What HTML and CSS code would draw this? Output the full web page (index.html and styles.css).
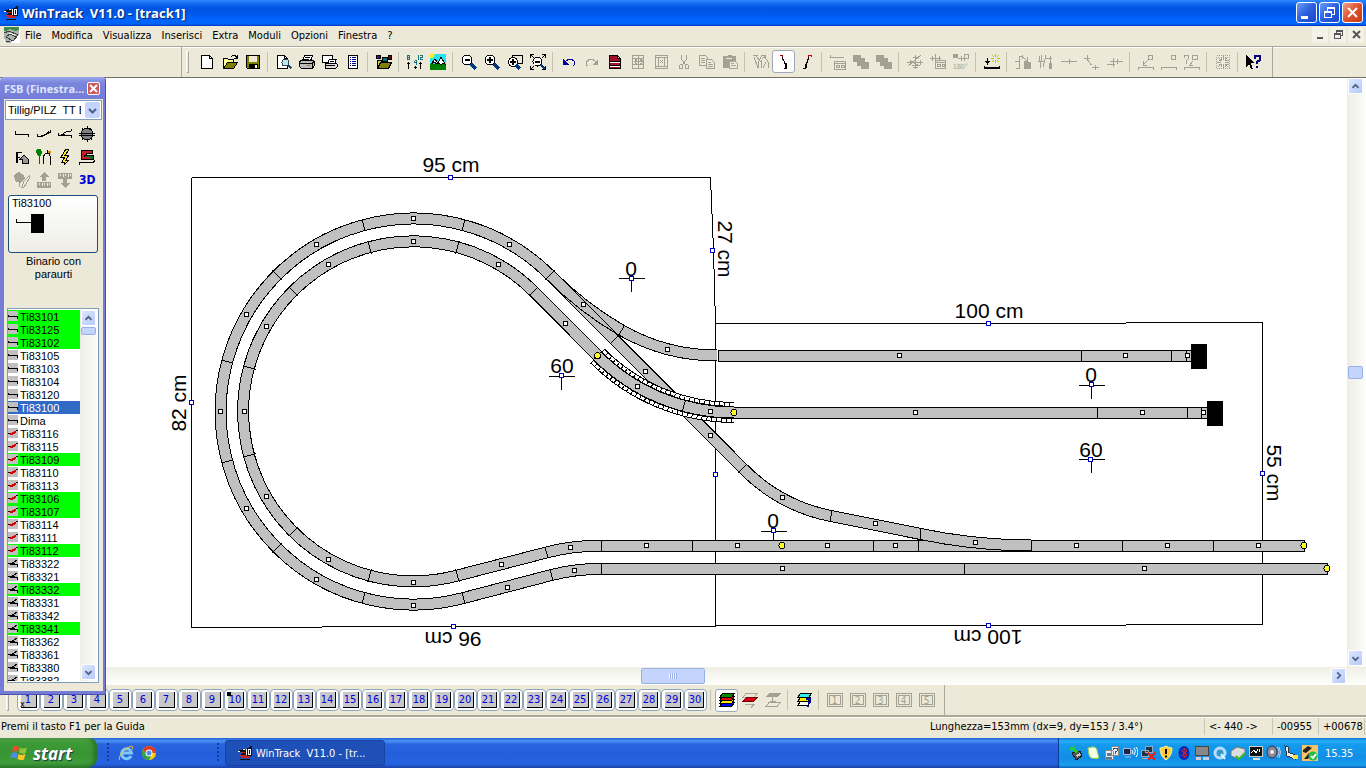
FILE: index.html
```html
<!DOCTYPE html>
<html lang="it">
<head>
    <meta charset="UTF-8">
    <meta name="viewport" content="width=device-width, initial-scale=1.0">
    <title>WinTrack V11.0 - [track1]</title>
    <link rel="stylesheet" href="styles.css">
</head>
<body>
    <header class="titlebar">
        <svg class="icon" viewBox="0 0 16 16"><path fill="#111" d="M0 6l6-2 2 1 6-4 1 1v9H2l3-3z"/><path fill="#fff" d="M9 4h1v6H9zM11 4h3v6h-3zM1 6h2v1H1zM6 4h2v1H6z"/><path fill="#111" d="M12 5h1v4h-1z"/><path fill="#c22" d="M3 10h6l4 2v1H5zM4 7h4v1H4z"/><path stroke="#111" d="M3 14.500h10"/></svg>
        <h1>WinTrack&nbsp; V11.0 - [track1]</h1>
        <div class="window-buttons">
            <button class="win" aria-label="Riduci a icona"><svg viewBox="0 0 19 19"><path stroke="#fff" stroke-width="3" d="M4 14h7"/></svg></button>
            <button class="win" aria-label="Ripristina"><svg viewBox="0 0 19 19"><path fill="none" stroke="#fff" d="M7.500 8V4.500h7v7H12M4.500 8.500h7v6h-7zM4 9.500h8M7 5.500h8"/></svg></button>
            <button class="win close" aria-label="Chiudi"><svg class="smooth" viewBox="0 0 19 19"><path stroke="#fff" stroke-width="2" d="M5 5l9 9M14 5l-9 9"/></svg></button>
        </div>
    </header>

    <nav class="menubar">
        <svg class="icon" viewBox="0 0 16 16"><path fill="#fff" d="M0 0h16v16H0z"/><path fill="#a9b3ab" d="M0 1h15v6l-9 9H2L0 11z"/><path fill="#3b8a4a" d="M0 0h15v3l-4 1-5-2-4 2H0z"/><path fill="none" stroke="#444" d="M0 6l5-2 9 4-5 6-7-4 4-3 6 3M2 14l4 1"/><path stroke="#fff" d="M5 6l6 2"/></svg>
        <a href="#">File</a>
        <a href="#">Modifica</a>
        <a href="#">Visualizza</a>
        <a href="#">Inserisci</a>
        <a href="#">Extra</a>
        <a href="#">Moduli</a>
        <a href="#">Opzioni</a>
        <a href="#">Finestra</a>
        <a href="#">?</a>
        <div class="mdi-buttons">
            <button aria-label="Riduci documento"><svg viewBox="0 0 14 14"><path stroke="#555" stroke-width="2" d="M4 10h6"/></svg></button>
            <button aria-label="Ripristina documento"><svg viewBox="0 0 14 14"><path fill="none" stroke="#555" d="M5.500 5V2.500h6v5H9M3.500 6.500h6v4h-6zM3 5.500h7M5 3.500h7"/></svg></button>
            <button aria-label="Chiudi documento"><svg class="smooth" viewBox="0 0 14 14"><path stroke="#555" stroke-width="2" d="M4 3l7 7M11 3l-7 7"/></svg></button>
        </div>
    </nav>

    <div class="toolbar">
        <div class="tools main-tools">
            <span class="grip"></span>
            <button class="tool" aria-label="Nuovo"><svg viewBox="0 0 16 16"><path fill="#fff" stroke="#000" d="M2.500 1.500h8l3 3v10h-11zM10.500 1.500v3h3"/></svg></button>
            <button class="tool" aria-label="Apri"><svg viewBox="0 0 16 16"><path fill="#ff9" stroke="#000" d="M1.500 14V4.500h4l1 1h5v3"/><path fill="#808000" stroke="#000" d="M1.500 14.500l4-6h10l-4 6z"/><path fill="none" stroke="#000" d="M9 3l2-1.500h2l2 2M15.500 1v3H12"/></svg></button>
            <button class="tool" aria-label="Salva"><svg viewBox="0 0 16 16"><path fill="#808000" stroke="#000" d="M1.500 1.500h13v13h-12l-1-1z"/><path fill="#ece9d8" d="M4 2h8v6H4z"/><path d="M4 10h9v4H4z"/><path fill="#fff" d="M10 11h2v3h-2z"/></svg></button>
            <span class="sep"></span>
            <button class="tool" aria-label="Anteprima"><svg viewBox="0 0 16 16"><path fill="#fff" stroke="#000" d="M1.500 1.500h7l3 3v10h-10zM8.500 1.500v3h3"/><circle cx="9.500" cy="8.500" r="3.500" fill="#b8e8ec" stroke="#345"/><path stroke="#246" stroke-width="2" d="M12 11l3.500 3.500"/></svg></button>
            <button class="tool" aria-label="Stampa"><svg viewBox="0 0 16 16"><path fill="#fff" stroke="#000" d="M3.500 7l2-5.500h8l-2 5.500M6 3.500h5M5 5.500h5"/><path fill="#bbb" stroke="#000" d="M.500 7.500l2-1h12l1 1v4l-2 3h-11l-2-2zM1 9.500h12v5M13.500 9l2-2"/><path stroke="#880" d="M8 11.500h3"/></svg></button>
            <button class="tool" aria-label="Stampa area"><svg viewBox="0 0 16 16"><path fill="#fff" stroke="#000" d="M.500 1.500h10v7H.500z"/><path fill="#fff" stroke="#000" d="M5.500 10l2-5h7l-2 5M8 7.500h4"/><path fill="#ddd" stroke="#000" d="M3.500 9.500h11l1 1v2l-2 2h-10zM4 11.500h9"/></svg></button>
            <button class="tool" aria-label="Elenco"><svg viewBox="0 0 16 16"><path fill="#fff" stroke="#000" d="M3.500 1.500h9v13h-9z"/><path stroke="#000098" d="M5 3.500h1m1 0h4M5 5.500h1m1 0h4M5 7.500h1m1 0h4M5 9.500h1m1 0h4M5 11.500h1m1 0h4"/></svg></button>
            <span class="sep"></span>
            <button class="tool" aria-label="Libreria"><svg viewBox="0 0 16 16"><path fill="#608" stroke="#000" d="M.500 1.500h4v3h-4z"/><path fill="#cc6" stroke="#000" d="M1.500 14V6.500h4l1 2h6"/><path fill="#087070" stroke="#000" d="M6.500 3.500h5v4h-5z"/><path fill="#700" stroke="#000" d="M12.500 1.500h3v4h-3z"/><path fill="#808000" stroke="#000" d="M1.500 14.500l3-6h11l-3 6z"/></svg></button>
            <span class="sep"></span>
            <button class="tool" aria-label="Altezze"><svg viewBox="0 0 16 16"><path fill="none" stroke="#187878" d="M.500 1.500h2v4h-2zM.500 3.500h2M7.500 6.500h2v4M9 8.500H7.500v-2M11.500 1v5M13 1.500h2.500v2H13.500v2H16"/><path fill="none" stroke="#000" d="M1.500 15V8M0 9.500h3M8.500 12v3M7 13.500h3M13.500 15V8M12 9.500h3"/></svg></button>
            <button class="tool" aria-label="Vista 3D"><svg viewBox="0 0 16 16"><path fill="#27e3ee" d="M0 0h16v16H0z"/><path fill="#ffee20" d="M0 0h5L3 4H0z"/><path fill="#008000" d="M0 10h16v6H0z"/><path fill="#fff" stroke="#000" d="M1 10l4-5 3 4 3-6 4 7-2-1-2 2-2-2-2 1-3-2z"/></svg></button>
            <span class="sep"></span>
            <button class="tool" aria-label="Zoom meno"><svg viewBox="0 0 16 16"><circle cx="6" cy="6" r="5" fill="#fff" stroke="#000"/><path stroke="#000" stroke-width="2" d="M3.500 6h5"/><path stroke="#003880" stroke-width="3" d="M10 10l5 5"/></svg></button>
            <button class="tool" aria-label="Zoom più"><svg viewBox="0 0 16 16"><circle cx="6" cy="6" r="5" fill="#fff" stroke="#000"/><path stroke="#000" stroke-width="2" d="M3 6h6M6 3v6"/><path stroke="#003880" stroke-width="3" d="M10 10l5 5"/></svg></button>
            <button class="tool" aria-label="Zoom area"><svg viewBox="0 0 16 16"><path fill="none" stroke="#000" d="M5 1.500h10.500v8H11M5.500 1v2"/><circle cx="6" cy="8" r="4.500" fill="#fff" stroke="#000"/><path stroke="#000" stroke-width="2" d="M3 8h6M6 5v6"/><path stroke="#003880" stroke-width="3" d="M9 11l4 4"/></svg></button>
            <button class="tool" aria-label="Zoom tutto"><svg viewBox="0 0 16 16"><path fill="none" stroke="#000" d="M.500 4V.500H4M12 .500h3.500V4M.500 12v3.500H4M15.500 12v3.500H12M1 1l3 3M15 1l-3 3M1 15l3-3"/><circle cx="7.500" cy="7.500" r="4.500" fill="#fff" stroke="#000"/><path stroke="#000" stroke-width="2" d="M5 7.500h5"/><path stroke="#003880" stroke-width="2" d="M11 11l4 4"/></svg></button>
            <span class="sep"></span>
            <button class="tool" aria-label="Annulla"><svg viewBox="0 0 16 16"><path d="M2 5v6h6z" fill="#000098"/><path fill="none" stroke="#000098" d="M4 8l3-2.500h4l2.500 2v3L12 12"/></svg></button>
            <button class="tool" aria-label="Ripeti" disabled><svg viewBox="0 0 16 16"><path d="M14 5v6H8z"/><path class="line" d="M12 8L9 5.500H5L2.500 8v3L4 12"/></svg></button>
            <button class="tool" aria-label="Proprietà"><svg viewBox="0 0 16 16"><path fill="#fff" stroke="#000" d="M2.500 1.500h8l3 3v10h-11zM10.500 1.500v3h3"/><path fill="#a01028" d="M3 2h7v3h3v2H3zM3 9h10v2H3zM3 13h10v1H3z"/><path stroke="#000" d="M3 7.500h10M3 11.500h10"/></svg></button>
            <button class="tool" aria-label="Righe" disabled><svg viewBox="0 0 16 16"><path class="line" d="M2.500 1.500h11v13h-11zM2 4.500h12M2 10.500h12M8.500 1v14M4 7.500h9M5 6v3M12 6v3"/><path d="M5 5h2v2H5zM10 5h2v2h-2zM5 9h2v2H5zM10 9h2v2h-2z"/></svg></button>
            <button class="tool" aria-label="Colonne" disabled><svg viewBox="0 0 16 16"><path class="line" d="M2.500 1.500h12v13h-12zM2 3.500h12M2 12.500h12M5.500 3v9M11.500 3v9M7 6l3 3M10 6l-3 3"/></svg></button>
            <button class="tool" aria-label="Taglia" disabled><svg viewBox="0 0 16 16"><path class="line" d="M5.500 1v4l4 6M10.500 1v4l-4 6M4.500 10.500h2v4h-3v-3zM9.500 10.500h2l1 1v3h-3z"/></svg></button>
            <button class="tool" aria-label="Copia" disabled><svg viewBox="0 0 16 16"><path class="line" d="M7 11.500H.500v-10h6l2 2V5M2 4.500h4M2 6.500h4M2 8.500h4M7.500 5.500h5l3 3v6h-8zM9 8.500h3M9 10.500h5M9 12.500h5"/></svg></button>
            <button class="tool" aria-label="Incolla" disabled><svg viewBox="0 0 16 16"><path d="M1 2h4l1-1h3l1 1h4v5H7v7H1z"/><path fill="#ece9d8" d="M4 4h6v1H4z"/><path fill="#ece9d8" stroke="#aca899" d="M7.500 7.500h6l2 2v5h-8zM9 9.500h3M9 11.500h5"/></svg></button>
            <span class="sep"></span>
            <button class="tool" aria-label="Binari" disabled><svg viewBox="0 0 16 16"><path class="line" d="M0 1.500h5M1 3l4 11M5 14V9l4-8h4M3 2l5 6M8 14l1-8M9 5l4-3M12 3l3 5v6M13 8l-3 6"/></svg></button>
            <button class="tool active" aria-label="Binario"><svg viewBox="0 0 16 16"><path fill="none" stroke="#a00000" d="M4 1.500h2.500v2"/><path fill="none" stroke="#000" d="M6.500 3v2l2 3 1 3v3M10.500 9v5.500H8M7.500 5v2"/></svg></button>
            <button class="tool" aria-label="Binario flessibile"><svg viewBox="0 0 16 16"><path fill="none" stroke="#c00" d="M9 3.500l1-2h2.500v1"/><path fill="none" stroke="#000" d="M9.500 3v2l-2 4v5M8.500 5v3l-2 3v3.500H4"/></svg></button>
            <span class="sep"></span>
            <button class="tool" aria-label="Testo" disabled><svg viewBox="0 0 16 16"><path class="line" d="M0 1v2.500h14M4.500 7.500h11v8h-11zM5 9.500h10M6 11.500h3v2H6zM11 11.500h3v2h-3z"/></svg></button>
            <button class="tool" aria-label="Porta avanti" disabled><svg viewBox="0 0 16 16"><path d="M0 1h8v3h4v4h4v7H8v-3H4V8H0z"/></svg></button>
            <button class="tool" aria-label="Porta dietro" disabled><svg viewBox="0 0 16 16"><path d="M0 1h8v3h4v4h4v7H8v-3H4V8H0z"/></svg></button>
            <span class="sep"></span>
            <button class="tool" aria-label="Sposta" disabled><svg viewBox="0 0 16 16"><path class="line" d="M0 8.500h16M8.500 1v14M1 12L14 1M3 6v5M13 6v5M6 3h5M6 13h5M4 7l8 5M5 11h8"/></svg></button>
            <button class="tool" aria-label="Sposta valore" disabled><svg viewBox="0 0 16 16"><path class="line" d="M0 4.500h11M5.500 0v9M2 2v5M9 2v5M5.500 6.500h10v8h-10zM5 8.500h10M7 10.500h3v2H7zM12 10.500h2v2h-2z"/></svg></button>
            <button class="tool" aria-label="Ruota di 180°" disabled><svg viewBox="0 0 16 16"><path d="M0 0h5v4H0z"/><path class="line" d="M5 4.500h6M11.500 0h4v4h-4zM11 7V4M8 2v5"/><text x="0" y="15">180°</text></svg></button>
            <span class="sep"></span>
            <button class="tool" aria-label="Punto di inizio"><svg viewBox="0 0 16 16"><path fill="none" stroke="#000" stroke-width="2" d="M0 14h15"/><path stroke="#000" d="M.500 12v3M15.500 12v3M3.500 4v7M1 7.500h5M2 8.500h3"/><path fill="none" stroke="#bcc414" d="M11.500 0v3M11.500 6v3M7 4.500h3M13 4.500h3M8 1l2 2M15 1l-2 2M8 8l2-2M15 8l-2-2"/></svg></button>
            <span class="sep"></span>
            <button class="tool" aria-label="Collega" disabled><svg viewBox="0 0 16 16"><path class="line" d="M1 14.500h3v-12h3M0 7.500h5M7 5V1M8 3l4 4M12 3v4H9"/><path d="M9 8h7v7H9z"/></svg></button>
            <button class="tool" aria-label="Separa" disabled><svg viewBox="0 0 16 16"><path class="line" d="M1 2v5M4 1L2 14M8 1L5 13M0 7.500h6M8 4.500h6M12.500 2v7"/><path d="M11 9h3v6h-3z"/></svg></button>
            <button class="tool" aria-label="Linea" disabled><svg viewBox="0 0 16 16"><path class="line" d="M0 7.500h16M8.500 5v5"/></svg></button>
            <button class="tool" aria-label="Curva" disabled><svg viewBox="0 0 16 16"><path class="line" d="M3.500 1v5l4 5M0 4.500h6M8 13.500h7M11.500 11v5"/></svg></button>
            <button class="tool" aria-label="Estendi" disabled><svg viewBox="0 0 16 16"><path class="line" d="M0 10.500h8M3 7.500h8M6.500 4v9M10 7.500h6M10.500 5v5"/></svg></button>
            <span class="sep"></span>
            <button class="tool" aria-label="Quota" disabled><svg viewBox="0 0 16 16"><path class="line" d="M10.500 1.500h4v4h-4zM10 6l-5 5M5 7v4h4M.500 16v-2.500h15V16"/></svg></button>
            <button class="tool" aria-label="Quota piana" disabled><svg viewBox="0 0 16 16"><path class="line" d="M10.500 1.500h4v4h-4zM.500 16v-2.500h15V16"/></svg></button>
            <button class="tool" aria-label="Quota ignota" disabled><svg viewBox="0 0 16 16"><path class="line" d="M.500 4V1.500h4v3l-2 2v2M2 9.500h1M8.500 1.500h5v4h-5zM9 7l-3 4h3M.500 16v-2.500h15V16"/></svg></button>
            <span class="sep"></span>
            <button class="tool" aria-label="Centra" disabled><svg viewBox="0 0 16 16"><path class="line" stroke-dasharray="1 1" d="M1.500 1.500h13v13h-13z"/><path class="line" d="M3 3l3 3M13 3l-3 3M3 13l3-3M13 13l-3-3M8.500 2v4M8.500 10v4M2 8.500h4M10 8.500h4M6.500 3v3h-3M10.500 3v3h3M6.500 13v-3h-3M10.500 13v-3h3"/></svg></button>
            <span class="sep"></span>
            <button class="tool" aria-label="Guida contestuale"><svg viewBox="0 0 16 16"><path d="M0 1v12l3-3 2 5h2L5 9h4z"/><path fill="none" stroke="#000080" stroke-width="2" d="M9 5V2h5v4l-3 2v2M10 13h2"/></svg></button>
        </div>
    </div>

    <main class="workspace">
        <svg class="canvas" viewBox="0 78 1347 589" preserveAspectRatio="xMinYMin meet">
            <defs>
                <rect id="node" class="node" x="-2" y="-2" width="4" height="4"/>
                <rect id="mark" class="mark" x="-2" y="-2" width="4" height="4"/>
                <circle id="end" class="end" r="3"/>
                <path id="cross" class="dim" d="M-13 0h26M0 0v13"/>
                <path id="tick" class="dim" d="M0 -6v12"/>
                <path id="ring-tick" class="dim" d="M413.500 212v13M413.500 235v13"/>
                <path id="outer" d="M550 275A193 193 0 1 0 463.500 598L551.500 575A193 193 0 0 1 601.500 569H1327"/>
                <path id="inner" d="M597.500 355.500L533.700 291.500A170 170 0 1 0 457.500 575.500L546.500 552.500A193 193 0 0 1 601 546H1304"/>
                <path id="branch" d="M550 275L743 468.500Q780 506 831 516L920.500 534Q976 545.500 1031 545.500"/>
                <path id="siding" d="M550 275Q583 308 621 330A193 193 0 0 0 717 355.500"/>
                <path id="flex" d="M597.500 356A193 193 0 0 0 734 412.500"/>
                <path id="top-line" d="M718 356H1191"/>
                <path id="low-line" d="M734 413H1207"/>
                <path id="ballast-top" d="M603 350.500A185 185 0 0 0 734 404.500"/>
                <path id="ballast-low" d="M592 361.500A201 201 0 0 0 734 420.500"/>
            </defs>

            <!-- dimension lines -->
            <path class="dim" d="M191.500 627.500V177.500M191.500 177.500H710.500L713.500 250L715.500 323.500V626.500M715 323.500H1126M1126 322.500H1262.500V624.500H1126M1126 625.500H715M715 626.500H322M322 627.500H191"/>

            <!-- tracks -->
            <use href="#outer" class="edge"/><use href="#outer" class="bed"/>
            <use href="#inner" class="edge"/><use href="#inner" class="bed"/>
            <path class="dim" d="M692.500 540v12M873.500 540v12M918.500 540v12M1122.500 540v12M1213.500 540v12M601.500 540v12M601.500 563v12M964.500 563v12"/>
            <use href="#branch" class="edge"/><use href="#branch" class="bed"/>
            <path class="dim" d="M1031.500 540v12"/>
            <use href="#siding" class="edge"/><use href="#siding" class="bed"/>
            <path class="dim" d="M554 271L619 336"/>
            <use href="#ballast-top" class="ballast-edge"/><use href="#ballast-top" class="ballast"/><use href="#ballast-top" class="stones"/>
            <use href="#ballast-low" class="ballast-edge"/><use href="#ballast-low" class="ballast"/><use href="#ballast-low" class="stones"/>
            <use href="#flex" class="edge"/><use href="#flex" class="bed"/>
            <use href="#top-line" class="edge"/><use href="#top-line" class="bed"/>
            <use href="#low-line" class="edge"/><use href="#low-line" class="bed"/>
            <path class="dim" d="M718.500 350v12M1081.500 350v12M1171.500 350v12M1186.500 350v12M1097.500 407v12M1187.500 407v12M1201.500 407v12M1304.500 540v12M1327.500 563v12"/>
            <path d="M1191 344h16v25h-16zM1207 401h16v25h-16z"/>

            <!-- joints -->
            <g id="ring-joints"></g>
            <use href="#tick" transform="translate(551.500 575) rotate(-15)"/>
            <use href="#tick" transform="translate(546.500 552.500) rotate(-15)"/>
            <use href="#tick" transform="translate(621.500 330.500) rotate(28)"/>
            <use href="#tick" transform="translate(615 339.500) rotate(45)"/>
            <use href="#tick" transform="translate(743 468.500) rotate(45)"/>
            <use href="#tick" transform="translate(831 516) rotate(12)"/>
            <use href="#tick" transform="translate(920.500 534) rotate(6)"/>
            <use href="#tick" transform="translate(684 405.500) rotate(15)"/>
            <use href="#tick" transform="translate(597.500 355.500) rotate(45)"/>
            <g id="nodes"></g>
            <use href="#end" x="597.500" y="355.500"/><use href="#end" x="734" y="412.500"/><use href="#end" x="782" y="545.500"/>
            <use href="#end" x="1304" y="545.500"/><use href="#end" x="1327" y="568.500"/>

            <!-- heights and dimensions -->
            <use href="#cross" x="631.500" y="278.500"/><use href="#cross" x="561.500" y="376.500"/><use href="#cross" x="1091.500" y="385.500"/>
            <use href="#cross" x="1091.500" y="459.500"/><path class="dim" d="M761 531.500h26M773.500 531v9"/>
            <g id="marks"></g>
            <g class="labels">
                <text x="631" y="276">0</text>
                <text x="562" y="373">60</text>
                <text x="1091" y="382">0</text>
                <text x="1091" y="457">60</text>
                <text x="773" y="528">0</text>
                <text x="451" y="172">95 cm</text>
                <text x="989" y="318">100 cm</text>
                <text transform="translate(186 403) rotate(-90)">82 cm</text>
                <text transform="translate(718 249) rotate(90)">27 cm</text>
                <text transform="translate(1267 473) rotate(90)">55 cm</text>
                <text transform="translate(453 632) rotate(180)">96 cm</text>
                <text transform="translate(988 630) rotate(180)">100 cm</text>
            </g>
        </svg>
        <div class="scroll vertical">
            <button class="arrow" aria-label="Su"><svg class="smooth" viewBox="0 0 15 15"><path d="M4 9l3.500-3.500L11 9"/></svg></button>
            <span class="thumb"></span>
            <button class="arrow" aria-label="Giù"><svg class="smooth" viewBox="0 0 15 15"><path d="M4 6l3.500 3.500L11 6"/></svg></button>
        </div>
    </main>
    <div class="scroll horizontal">
        <button class="arrow" aria-label="Sinistra"><svg class="smooth" viewBox="0 0 15 15"><path d="M9 4L5.500 7.500 9 11"/></svg></button>
        <span class="thumb"></span>
        <button class="arrow" aria-label="Destra"><svg class="smooth" viewBox="0 0 15 15"><path d="M6 4l3.500 3.500L6 11"/></svg></button>
    </div>

    <div class="layers">
        <div class="tools layer-tools">
            <span class="grip"></span>
            <div class="layer-list" id="layer-list"></div>
            <span class="sep"></span>
            <button class="tool active" aria-label="Tutti i livelli"><svg viewBox="0 0 16 16"><g stroke="#000"><path fill="#00f" d="M.500 14.500l3-4h12l-3 4z"/><path fill="#fe0" d="M.500 11.500l3-4h12l-3 4z"/><path fill="#e00" d="M.500 8.500l3-4h12l-3 4z"/><path fill="#080" d="M.500 5.500l3-4h12l-3 4z"/></g></svg></button>
            <button class="tool" aria-label="Livello attivo"><svg viewBox="0 0 16 16"><path fill="none" stroke="#aca899" d="M4 1.500h11l-3 4H1zM3 12.500h9l-3 3"/><path fill="#d80018" stroke="#700" d="M.500 9.500l4-4h11l-4 4z"/></svg></button>
            <button class="tool" aria-label="Livello sotto" disabled><svg viewBox="0 0 16 16"><path d="M1 5l3-4h12l-3 4z"/><path class="line" d="M7.500 5v6M5 9h6M1 14.500l3-4h11l-3 4z"/></svg></button>
            <span class="sep"></span>
            <button class="tool" aria-label="Guida livelli"><svg viewBox="0 0 16 16"><path fill="#fff" stroke="#000" d="M1.500 13.500l3-4h10l-3 4z"/><path fill="#fe0" stroke="#000" d="M1.500 9.500l3-4h10l-3 4z"/><path fill="#3ee" stroke="#000" d="M1.500 5.500l3-4h11l-3 4z"/><path fill="none" stroke="#0000a0" stroke-width="2" d="M10 7h4v3l-2 2M11 14h2"/></svg></button>
            <span class="sep"></span>
            <button class="tool boxed" disabled><span>1</span></button>
            <button class="tool boxed" disabled><span>2</span></button>
            <button class="tool boxed" disabled><span>3</span></button>
            <button class="tool boxed" disabled><span>4</span></button>
            <button class="tool boxed" disabled><span>5</span></button>
        </div>
    </div>

    <div class="statusbar">
        <span class="hint">Premi il tasto F1 per la Guida</span>
        <span class="measure">Lunghezza=153mm (dx=9, dy=153 / 3.4°)</span>
        <span class="range">&lt;- 440 -&gt;</span>
        <span class="coord">-00955</span>
        <span class="coord">+00678</span>
    </div>

    <footer class="taskbar">
        <button class="start">
            <svg class="smooth" viewBox="0 0 18 18"><path fill="#e8512a" d="M3 3q3-2 6 0L8 8q-3-2-6 0z"/><path fill="#8cc43c" d="M10 3.500q3 2 7 0L15.500 9q-3 1.500-6.500-.500z"/><path fill="#4a8cf0" d="M1.500 9.500q3-2 6 0l-1 5q-3-2-6 0z"/><path fill="#f8c828" d="M8.500 10q3 2 7 0L14 15.500q-3 1.500-6.500-.500z"/></svg>
            start
        </button>
        <div class="quick">
            <span class="dots"></span>
            <a href="#" aria-label="Internet Explorer"><svg class="smooth" viewBox="0 0 16 16"><path fill="none" stroke="#7cc8f8" stroke-width="3" d="M13 11a5 5 0 1 1 .500-3H5"/><path fill="none" stroke="#f4c430" d="M2 15q-2-1 1-6T12 1.500q4-1 2 3"/></svg></a>
            <a href="#" aria-label="Chrome"><svg class="smooth" viewBox="0 0 16 16"><circle cx="8" cy="8" r="7" fill="#fc0"/><path fill="#db3a2c" d="M8 8H15A7 7 0 0 0 2 4.500l3 5z"/><path fill="#2ba24c" d="M2 4.500A7 7 0 0 0 8 15l3-6H5z"/><circle cx="8" cy="8" r="3.500" fill="#fff"/><circle cx="8" cy="8" r="2.500" fill="#4a8cf0"/></svg></a>
            <span class="dots last"></span>
        </div>
        <button class="task">
            <svg class="icon" viewBox="0 0 16 16"><path fill="#111" d="M0 6l6-2 2 1 6-4 1 1v9H2l3-3z"/><path fill="#fff" d="M9 4h1v6H9zM11 4h3v6h-3zM1 6h2v1H1zM6 4h2v1H6z"/><path fill="#111" d="M12 5h1v4h-1z"/><path fill="#c22" d="M3 10h6l4 2v1H5zM4 7h4v1H4z"/><path stroke="#111" d="M3 14.500h10"/></svg>
            <span>WinTrack&nbsp; V11.0 - [tr...</span>
        </button>
        <div class="tray">
            <svg viewBox="0 0 16 16"><path fill="#555" stroke="#222" d="M4 8l8-2 2 5-6 4z"/><path fill="#ccc" d="M8 10l4-2 1 2-4 2z"/><path fill="#2c3" d="M2 2l5-1-1 2 4 3-2 2-4-3-1 2z"/></svg>
            <svg class="smooth" viewBox="0 0 16 16"><path fill="#f4ffe4" stroke="#8c5" d="M2 3q8-3 9 2l2 8q-9 2-10-3z"/></svg>
            <svg viewBox="0 0 16 16"><path fill="#eee" stroke="#888" d="M1.500 5.500h8v9h-8zM7.500 1.500h7v9h-7z"/><path fill="#fff" stroke="#357" d="M9 5V3h4v3l-2 1v2"/><path fill="#579" d="M3 8h4v3H3zM2 12h6v2H2z"/></svg>
            <svg class="smooth" viewBox="0 0 16 16"><path fill="#224" stroke="#abd" d="M1.500 3.500h7v6h-7zM3 12h6"/><path fill="none" stroke="#fff" d="M10 5q2 2 0 4M12 3q3 3 0 7M14 2q4 5 0 10"/></svg>
            <svg viewBox="0 0 16 16"><path fill="#234" stroke="#9ab" d="M5.500 1.500h7v6h-7zM1.500 5.500h7v6h-7zM2 13.500h8"/><path stroke="#d22" stroke-width="2" d="M8 8l7 7M15 8l-7 7"/></svg>
            <svg class="smooth" viewBox="0 0 16 16"><path fill="#fc3" stroke="#fff3a0" d="M8 1q3 2 6 2 0 8-6 12Q2 11 2 3q3 0 6-2z"/><path stroke="#000" stroke-width="2" d="M8 4v5M8 10.500v2"/></svg>
            <svg class="smooth" viewBox="0 0 16 16"><ellipse cx="8" cy="8" rx="5.500" ry="7" fill="#0828b0"/><path fill="none" stroke="#e22" d="M5 5l6 5-3 3V3l3 3-6 5"/></svg>
            <svg viewBox="0 0 16 16"><path fill="#888" stroke="#444" d="M1.500 1.500h13v9h-13z"/><path fill="#ccd" d="M2 12h5v3H2zM9 12h6v3H9z"/></svg>
            <svg class="smooth" viewBox="0 0 16 16"><circle cx="8" cy="8" r="5" fill="#39c" stroke="#bdf" stroke-width="3"/><path stroke="#dff" stroke-width="2" d="M9 9l4 5"/></svg>
            <svg class="smooth" viewBox="0 0 16 16"><path fill="#ddd" stroke="#777" d="M1 6l6-4 8 2v6l-6 4-8-3z"/><path fill="none" stroke="#3b3" stroke-width="2" d="M6 11l3 3 6-6"/></svg>
            <svg viewBox="0 0 16 16"><path fill="#111" stroke="#ccc" d="M1.500 1.500h13v10h-13z"/><path fill="#ddd" d="M5 13h7v2H5z"/><path stroke="#fff" d="M3 8l3-3 2 3 2-4M11 4v3"/></svg>
            <svg class="smooth" viewBox="0 0 16 16"><ellipse cx="6" cy="7" rx="5" ry="6" fill="#889" stroke="#334"/><circle cx="6" cy="7" r="2" fill="#eee"/><path fill="none" stroke="#ccd" d="M11 2q4 4 0 10M13 2q3 5 0 11"/></svg>
            <svg viewBox="0 0 16 16"><path fill="#eee" stroke="#333" d="M1 1l3 1v5l7 3v4l-8-3z"/><path fill="#fd4" d="M9 10h5v4H9z"/></svg>
            <svg class="smooth" viewBox="0 0 16 16"><path fill="#f7c46a" d="M0 0h16v16H0z"/><path fill="#222" d="M1 5l5-4 4 2-6 5-3-1zM2 14l5-6 2 2-3 4z"/><circle cx="11" cy="11" r="4.500" fill="#2b4"/><path fill="none" stroke="#fff" stroke-width="2" d="M9 11l2 2 3-4"/></svg>
            <time>15.35</time>
        </div>
    </footer>

    <!-- floating track palette -->
    <aside class="palette">
        <div class="palette-title">
            <span>FSB (Finestra...</span>
            <button aria-label="Chiudi finestra"><svg class="smooth" viewBox="0 0 11 11"><path stroke="#fff" stroke-width="2" d="M2 2l7 7M9 2L2 9"/></svg></button>
        </div>
        <div class="palette-body">
            <label class="combo">
                <select aria-label="Sistema di binari"><option>Tillig/PILZ&nbsp; TT Bettung</option></select>
                <span class="drop"><svg class="smooth" viewBox="0 0 15 17"><path d="M4 7l3.500 3.500L11 7"/></svg></span>
            </label>
            <div class="kinds">
                <button aria-label="Binari diritti"><svg viewBox="0 0 18 18"><path fill="none" stroke="#000" d="M2.500 6v3.500h13V12"/></svg></button>
                <button aria-label="Binari curvi"><svg viewBox="0 0 18 18"><path fill="none" stroke="#000" d="M2.500 9v2.500H7L15.500 7V5M6 10.500h3l5-4"/></svg></button>
                <button aria-label="Scambi"><svg viewBox="0 0 18 18"><path fill="none" stroke="#000" d="M2.500 8v2.500h13V13M5 10l5-3 5-1V4M5 9h4"/></svg></button>
                <button aria-label="Piattaforme"><svg viewBox="0 0 18 18"><circle cx="9" cy="9" r="6" fill="#808080" stroke="#000"/><path stroke="#000" d="M1 8.500h16M1 10.500h16M4 3l2 2M13 3l-2 2M4 15l2-2M14 15l-2-2M9 1v3M9 14v3"/></svg></button>
                <button aria-label="Edifici"><svg viewBox="0 0 18 18"><path fill="none" stroke="#000" d="M3.500 15V4.500h5M3 9.500h4M4.500 15V5"/><path fill="#999" stroke="#000" d="M7 11l4-4 4 4v4H9v-4z"/></svg></button>
                <button aria-label="Paesaggio"><svg viewBox="0 0 18 18"><path fill="#008000" d="M2 1h4l1 3-1 4H3L1 4z"/><path fill="none" stroke="#632" d="M4.500 8v8"/><path fill="none" stroke="#000" d="M8.500 16V8l2-2.500h3l2 3v8M12.500 5V2M14.500 4v4"/><path fill="#c80" d="M13 3h3v2h-3z"/></svg></button>
                <button aria-label="Elettrico"><svg viewBox="0 0 18 18"><path fill="#fe2" stroke="#000" d="M10 1L5 9h4l-3 5h3l-1 3 5-5h-3l3-5H9l4-5z"/></svg></button>
                <button aria-label="Veicoli"><svg viewBox="0 0 18 18"><path fill="#c02020" stroke="#000" d="M3.500 2.500h11v3h-6v6h-5z"/><path fill="#087030" stroke="#000" d="M6.500 7.500h9v4h-9z"/><path fill="#c02020" d="M4 9h8v2H4z"/><path fill="none" stroke="#000" d="M1.500 17v-2.500h14l1-2"/></svg></button>
                <button aria-label="Disegno" disabled><svg viewBox="0 0 18 18"><path d="M1 4l5-3 5 3 1 4-5 4-5-2z"/><path class="line" d="M6 12v4M9 16l2-6 5-5v3l-5 8zM3 2v8"/></svg></button>
                <button aria-label="Carica" disabled><svg viewBox="0 0 18 18"><path d="M9 1l5 5h-3v4H7V6H4zM2 11h14v6H2z"/><path stroke="#ece9d8" d="M4 12v2M7 12v3M9 12v2M12 12v3M14 12v2"/></svg></button>
                <button aria-label="Scarica" disabled><svg viewBox="0 0 18 18"><path d="M2 2h14v6H2zM7 8h4v4h3l-5 5-5-5h3z"/><path stroke="#ece9d8" d="M4 3v2M7 3v3M9 3v2M12 3v3M14 3v2"/></svg></button>
                <button class="three-d">3D</button>
            </div>
            <button class="preview">
                <span>Ti83100</span>
                <svg viewBox="0 0 40 24"><path fill="none" stroke="#000" d="M4.500 8v3.500H19"/><path d="M19 3h13v19H19z"/></svg>
            </button>
            <p class="part-name">Binario con paraurti</p>
            <div class="parts">
                <svg class="hidden-defs">
                    <defs>
                        <g id="straight"><path fill="#c0c0c0" d="M0 1h10v10H0z"/><path fill="none" stroke="#000" d="M0 4.500V6.500h9.500V9"/></g>
                        <g id="curve"><path fill="#c0c0c0" d="M0 1h10v10H0z"/><path stroke="#c00" stroke-width="2" d="M2 7h3M4 6h3M6 5h2"/><path stroke="#000" d="M0 6.500h2M8 3.500h2"/></g>
                        <g id="switch"><path fill="#c0c0c0" d="M0 1h10v10H0z"/><path fill="none" stroke="#000" d="M0 6.500h2l1 1h7M3 7l6-4M4 7l3-1M9.500 8v2"/></g>
                    </defs>
                </svg>
                <ul id="part-list"></ul>
                <div class="scroll vertical top">
                    <button class="arrow" aria-label="Elenco su"><svg class="smooth" viewBox="0 0 15 15"><path d="M4 9l3.500-3.500L11 9"/></svg></button>
                    <span class="thumb"></span>
                    <button class="arrow" aria-label="Elenco giù"><svg class="smooth" viewBox="0 0 15 15"><path d="M4 6l3.500 3.500L11 6"/></svg></button>
                </div>
            </div>
        </div>
    </aside>

    <script>
        const parts = {
            straight: ['Ti83101', 'Ti83125', 'Ti83102', 'Ti83105', 'Ti83103', 'Ti83104', 'Ti83120', 'Ti83100', 'Dima'],
            curve: ['Ti83116', 'Ti83115', 'Ti83109', 'Ti83110', 'Ti83113', 'Ti83106', 'Ti83107', 'Ti83114', 'Ti83111', 'Ti83112'],
            switch: ['Ti83322', 'Ti83321', 'Ti83332', 'Ti83331', 'Ti83342', 'Ti83341', 'Ti83362', 'Ti83361', 'Ti83380', 'Ti83382']
        };
        const used = ['Ti83101', 'Ti83125', 'Ti83102', 'Ti83109', 'Ti83106', 'Ti83107', 'Ti83112', 'Ti83332', 'Ti83341'];
        const selected = 'Ti83100';

        document.getElementById('part-list').innerHTML = Object.keys(parts).map(kind =>
            parts[kind].map(name => {
                const state = name === selected ? 'selected' : used.includes(name) ? 'used' : '';
                return `<li class="${state}"><svg><use href="#${kind}"/></svg>${name}</li>`;
            }).join('')
        ).join('');

        // layer 1 is hidden, layer 10 is the current one
        let layers = '';
        for (let i = 1; i <= 30; i++) {
            const flag = i === 1 ? '<i class="hidden-mark">x</i>' : i === 10 ? '<i class="current-mark"></i>' : '';
            layers += `<button class="layer"><span>${i}</span>${flag}</button>`;
        }
        document.getElementById('layer-list').innerHTML = layers;

        // centre pixel of every track piece
        const nodes = [
            [413, 218], [509, 244], [316, 244], [246, 314], [220, 411], [246, 508], [316, 579], [413, 605], [507, 587], [574, 570],
            [413, 241], [498, 264], [328, 264], [266, 326], [244, 411], [266, 496], [328, 559], [413, 582], [501, 564], [570, 547],
            [565, 323], [583, 304], [667, 349], [645, 371], [637, 386], [710, 411], [710, 435], [782, 497], [875, 523], [975, 542],
            [899, 355], [1125, 355], [1187, 355], [915, 412], [1142, 412], [1203, 412],
            [646, 545], [737, 545], [827, 545], [895, 545], [1076, 545], [1167, 545], [1258, 545], [782, 568], [1144, 568]
        ];
        const marks = [
            [631, 278], [561, 375], [1091, 384], [1090, 459], [773, 530],
            [450, 177], [191, 402], [453, 626], [712, 250], [715, 474], [988, 323], [988, 625], [1262, 473]
        ];
        const place = (id, points) => points.map(([x, y]) => `<use href="#${id}" x="${x + 0.5}" y="${y + 0.5}"/>`).join('');
        document.getElementById('nodes').innerHTML = place('node', nodes);
        document.getElementById('marks').innerHTML = place('mark', marks);

        document.getElementById('ring-joints').innerHTML = [45, 15, -15, -45, -75, -105, -135, -165, -195].map(angle =>
            `<use href="#ring-tick" transform="rotate(${angle} 413.5 411.5)"/>`
        ).join('');
    </script>
</body>
</html>
```
FILE: styles.css
```css
* {
    box-sizing: border-box;
}
body {
    display: flex;
    flex-direction: column;
    height: 100vh;
    margin: 0;
    overflow: hidden;
    background: #ece9d8;
    color: #000;
    font-family: "DejaVu Sans Condensed", "Liberation Sans", sans-serif;
    font-size: 11px;
}
button {
    margin: 0;
    padding: 0;
    border: 0;
    background: none;
    color: inherit;
    font: inherit;
}
a {
    color: inherit;
    text-decoration: none;
}
svg {
    display: block;
    flex: none;
    shape-rendering: crispEdges;
}
svg.smooth {
    shape-rendering: auto;
}
.icon {
    width: 16px;
    height: 16px;
}

/* title bar */
.titlebar {
    display: flex;
    align-items: center;
    flex: none;
    height: 26px;
    padding: 0 3px 1px;
    background: linear-gradient(#2f8cff 0, #1a6cf2 3px, #0054e3 8px, #0058ec 14px, #0066ff 20px, #0062f8 24px, #0038b8 26px);
    color: #fff;
}
.titlebar h1 {
    margin: 0 auto 0 3px;
    font-family: "Open Sans", "Noto Sans", sans-serif;
    font-size: 13px;
    font-weight: 700;
    text-shadow: 1px 1px 1px #0a246a;
}
.window-buttons {
    display: flex;
    gap: 2px;
}
.win {
    width: 21px;
    height: 21px;
    border: 1px solid #fff;
    border-radius: 3px;
    background: linear-gradient(135deg, #6f9cf4, #2a5fe0 50%, #1c48c8);
}
.win.close {
    background: linear-gradient(135deg, #f0a088, #e0502c 50%, #c43a14);
}

/* menu */
.menubar {
    display: flex;
    align-items: center;
    flex: none;
    height: 20px;
    padding: 0 2px 2px 4px;
}
.menubar a {
    padding: 0 5px;
}
.mdi-buttons {
    display: flex;
    gap: 2px;
    margin-left: auto;
}
.mdi-buttons button {
    width: 16px;
    height: 16px;
    padding: 1px;
    background: #f4f2e8;
}

/* toolbars */
.toolbar {
    flex: none;
    height: 32px;
    padding-left: 181px;
    border-top: 1px solid #aca899;
    border-bottom: 1px solid #716f64;
    box-shadow: inset 0 1px #fff;
}
.tools {
    display: flex;
    align-items: center;
    width: max-content;
    height: 30px;
    border-right: 1px solid #aca899;
}
.main-tools {
    padding: 0 7px 1px 4px;
    border-left: 1px solid #aca899;
}
.grip {
    width: 3px;
    height: 22px;
    margin-right: 6px;
    border: 1px solid;
    border-color: #fff #aca899 #aca899 #fff;
}
.sep {
    width: 1px;
    height: 20px;
    margin: 0 4px 0 3px;
    background: #c5c2b0;
}
.tool {
    display: flex;
    align-items: center;
    justify-content: center;
    width: 23px;
    height: 23px;
    border-radius: 3px;
}
.tool svg {
    width: 16px;
    height: 16px;
}
.tool.active {
    border: 1px solid #9aaabc;
    background: #fff;
}
button:disabled svg {
    fill: #a5a192;
}
button:disabled .line {
    fill: none;
    stroke: #a5a192;
}
.tool text {
    font-family: "Liberation Sans", sans-serif;
    font-size: 7px;
}

/* drawing area */
.workspace {
    display: flex;
    flex: 1;
    min-height: 0;
    background: #fff;
}
.canvas {
    flex: 1;
    min-width: 0;
    height: 100%;
}
.edge,
.bed,
.ballast-edge,
.ballast,
.stones,
.dim {
    fill: none;
}
.edge {
    stroke: #000;
    stroke-width: 12px;
}
.bed {
    stroke: #c0c0c0;
    stroke-width: 10px;
}
.dim {
    stroke: #000;
}
.ballast-edge {
    stroke: #000;
    stroke-width: 5px;
}
.ballast {
    stroke: #fff;
    stroke-width: 3px;
}
.stones {
    stroke: #000;
    stroke-width: 3px;
    stroke-dasharray: 1 4;
}
.node {
    fill: #fff;
    stroke: #000;
}
.mark {
    fill: #fff;
    stroke: #0000c0;
}
.end {
    fill: #ffff20;
    stroke: #000;
}
.labels {
    font-family: "Liberation Sans", Arial, sans-serif;
    font-size: 21px;
    text-anchor: middle;
}

/* scroll bars */
.scroll {
    display: flex;
    flex: none;
    background: #f6f5f0;
}
.scroll.vertical {
    flex-direction: column;
    align-items: center;
    width: 19px;
    padding: 0 2px 1px 0;
    background: linear-gradient(90deg, #eeede5, #fdfdfa);
}
.scroll.horizontal {
    align-items: center;
    height: 18px;
    padding: 0 20px 1px 0;
    background: linear-gradient(#f0efe6, #fefefb);
}
.arrow {
    width: 15px;
    height: 16px;
    border: 1px solid #fff;
    border-radius: 2px;
    background: linear-gradient(135deg, #dce6ff, #b6caf8);
}
.arrow path,
.drop path {
    fill: none;
    stroke: #4d6185;
    stroke-width: 2px;
}
.thumb {
    margin: auto;
    border: 1px solid #98b0e8;
    border-radius: 2px;
    background: #c4d4fc;
}
.vertical .thumb {
    width: 15px;
    height: 13px;
}
.horizontal .thumb {
    width: 64px;
    height: 16px;
    background: repeating-linear-gradient(90deg, #eef4ff 0 1px, #98b0e8 1px 2px) center / 8px 6px no-repeat, #c4d4fc;
}
.scroll.top .thumb {
    height: 8px;
    margin-top: 1px;
}

/* layer bar */
.layers {
    flex: none;
    height: 32px;
    border-bottom: 2px solid #aca899;
}
.layer-tools {
    padding: 0 6px;
}
.layer-tools .grip {
    margin-right: 8px;
}
.layer-list {
    display: flex;
}
.layer {
    position: relative;
    display: flex;
    align-items: center;
    justify-content: center;
    width: 23px;
    height: 22px;
    border: 1px solid #8ea6bc;
    border-radius: 4px;
    background: #fff;
}
.layer span {
    width: 16px;
    height: 16px;
    border-right: 1px solid #000;
    border-bottom: 1px solid #000;
    background: #c8c8c8;
    color: #0000e0;
    line-height: 16px;
    text-align: center;
}
.hidden-mark {
    position: absolute;
    bottom: 1px;
    left: 2px;
    font-size: 9px;
    font-style: normal;
    line-height: 9px;
}
.current-mark {
    position: absolute;
    top: 2px;
    left: 2px;
    width: 4px;
    height: 4px;
    background: #000;
}
.boxed span {
    width: 16px;
    height: 14px;
    border: 3px double #a5a192;
    color: #a5a192;
    font-size: 10px;
    line-height: 9px;
}

/* status bar */
.statusbar {
    display: flex;
    align-items: center;
    flex: none;
    height: 21px;
    padding: 0 1px 3px;
    border-top: 1px solid #fff;
    line-height: 17px;
    white-space: nowrap;
}
.statusbar span {
    padding-left: 4px;
    border-right: 1px solid #c8c5b2;
}
.statusbar .hint {
    flex: 1;
    padding: 0;
    border: 0;
}
.measure {
    width: 279px;
}
.range {
    width: 68px;
}
.coord {
    width: 46px;
}

/* task bar */
.taskbar {
    display: flex;
    align-items: center;
    flex: none;
    height: 30px;
    background: linear-gradient(#1f5fd8 0, #4a92f4 3px, #2a66e0 6px, #245edb 16px, #2663e0 26px, #1941a5 30px);
    color: #fff;
}
.start {
    display: flex;
    align-items: center;
    gap: 5px;
    width: 97px;
    height: 30px;
    padding-left: 10px;
    border-radius: 0 8px 10px 0;
    background: linear-gradient(#5eac56 0, #3c9a38 5px, #3a9434 16px, #3f9d3b 25px, #2a7a28 30px);
    box-shadow: inset -3px 0 4px #2a7028;
    font-family: "Open Sans", "Noto Sans", sans-serif;
    font-size: 17px;
    font-style: italic;
    font-weight: 700;
    text-shadow: 1px 1px 1px #234;
}
.start svg {
    width: 18px;
    height: 18px;
}
.quick {
    display: flex;
    align-items: center;
    gap: 7px;
    width: 128px;
    padding-left: 8px;
}
.quick svg {
    width: 16px;
    height: 16px;
}
.dots {
    width: 6px;
    height: 20px;
    background: conic-gradient(#163c9c 25%, transparent 0) 0 0 / 4px 4px;
}
.dots.last {
    margin: 0 4px 0 auto;
}
.task {
    display: flex;
    align-items: center;
    gap: 3px;
    width: 160px;
    height: 26px;
    padding-left: 11px;
    border: 1px solid #1744a4;
    border-radius: 3px;
    background: #1e50b8;
}
.tray {
    display: flex;
    align-items: center;
    gap: 2px;
    width: 308px;
    height: 30px;
    margin-left: auto;
    padding-left: 9px;
    border-left: 1px solid #0c3c98;
    background: linear-gradient(#0f78d8 0, #28aef8 3px, #149aec 7px, #118ee6 20px, #17a0f0 27px, #0e62b8 30px);
}
.tray svg {
    width: 16px;
    height: 16px;
}
.tray time {
    margin-left: 5px;
}

/* floating palette */
.palette {
    position: absolute;
    top: 77px;
    left: 0;
    width: 106px;
    height: 618px;
    padding: 0 3px 4px 4px;
    border-radius: 4px 4px 0 0;
    background: linear-gradient(#9aa6ea 0, #7a86dc 6px, #747cd8 22px);
    box-shadow: inset -1px -1px #4a50a8;
}
.palette-title {
    display: flex;
    align-items: center;
    justify-content: space-between;
    height: 22px;
    padding-right: 3px;
    color: #dfe6fc;
    font-family: "Open Sans", "Noto Sans", sans-serif;
    font-weight: 700;
    white-space: nowrap;
}
.palette-title button {
    flex: none;
    width: 13px;
    height: 13px;
    border: 1px solid #fff;
    border-radius: 2px;
    background: #cc5a5c;
}
.palette-body {
    display: flex;
    flex-direction: column;
    height: 592px;
    padding: 1px 1px 8px;
    background: #ece9d8;
    font-family: "Liberation Sans", Arial, sans-serif;
}
.combo {
    display: flex;
    flex: none;
    height: 20px;
    border: 1px solid #7f9db9;
    background: #fff;
}
.combo select {
    flex: 1;
    min-width: 0;
    margin-right: 3px;
    padding: 0 0 0 2px;
    border: 0;
    appearance: none;
    background: #fff;
    font: inherit;
    text-overflow: clip;
}
.drop {
    width: 15px;
    margin: 1px;
    border-radius: 2px;
    background: #c4d4fc;
}
.kinds {
    display: grid;
    grid-template-columns: repeat(4, 1fr);
    grid-auto-rows: 23px;
    place-items: center;
    margin: 2px 4px 1px 6px;
}
.kinds svg {
    width: 18px;
    height: 18px;
}
.three-d {
    color: #0000d8;
    font-family: "DejaVu Sans Condensed", sans-serif;
    font-size: 12px;
    font-weight: 700;
}
.preview {
    display: flex;
    flex-direction: column;
    align-items: flex-start;
    justify-content: flex-start;
    gap: 2px;
    flex: none;
    height: 58px;
    margin: 3px 4px 0 3px;
    padding: 1px 3px;
    border: 1px solid #1c4c78;
    border-radius: 3px;
    background: linear-gradient(#fff, #eeede6);
}
.preview svg {
    width: 40px;
    height: 24px;
}
.part-name {
    height: 55px;
    margin: 0;
    padding: 2px 18px 0;
    line-height: 13px;
    text-align: center;
}
.parts {
    display: flex;
    flex: 1;
    min-height: 0;
    margin: 0 3px 0 2px;
    padding: 1px 0;
    border: 1px solid #7f9db9;
    background: #fff;
}
.parts ul {
    flex: 1;
    margin: 0;
    padding: 0;
    overflow: hidden;
    list-style: none;
}
.parts li {
    display: flex;
    gap: 1px;
    height: 13px;
    line-height: 14px;
}
.parts li svg {
    width: 11px;
    height: 13px;
}
.hidden-defs {
    width: 0;
    height: 0;
}
.used {
    background: #00ff00;
}
.selected {
    background: #316ac5;
    color: #fff;
}
.parts .scroll {
    width: 18px;
    padding-right: 1px;
}
```
